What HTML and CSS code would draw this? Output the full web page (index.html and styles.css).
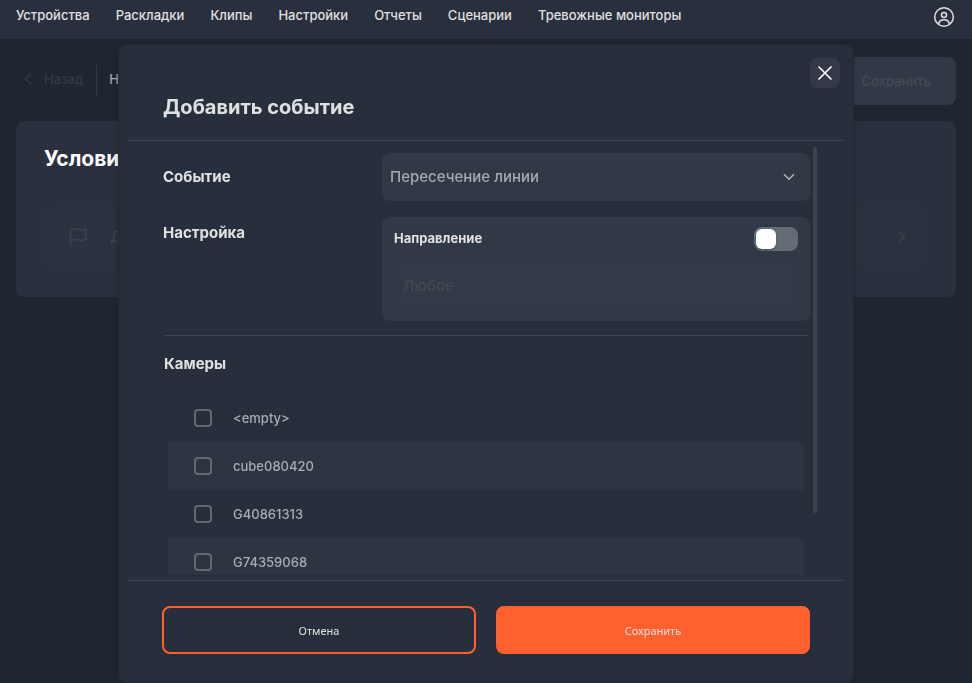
FILE: index.html
```html
<!DOCTYPE html>
<html lang="ru">
<head>
<meta charset="utf-8">
<meta name="viewport" content="width=device-width, initial-scale=1">
<title>Добавить событие</title>
<link rel="stylesheet" href="styles.css">
</head>
<body>
<header class="topbar">
  <nav class="nav">
    <a href="#">Устройства</a>
    <a href="#">Раскладки</a>
    <a href="#">Клипы</a>
    <a href="#">Настройки</a>
    <a href="#">Отчеты</a>
    <a href="#">Сценарии</a>
    <a href="#">Тревожные мониторы</a>
  </nav>
  <button class="profile" type="button" aria-label="Профиль">
    <svg width="22" height="22" viewBox="0 0 22 22" fill="none" stroke="currentColor" stroke-width="1.5">
      <circle cx="11" cy="11" r="9.3"/>
      <circle cx="11" cy="9" r="2.5"/>
      <path d="M5.6 18.4c.3-3 2.500-4.600 5.400-4.600s5.100 1.600 5.400 4.600"/>
    </svg>
  </button>
</header>

<main class="page">
  <div class="toolbar">
    <a class="back" href="#">
      <svg width="8" height="12" viewBox="0 0 8 12" fill="none" stroke="currentColor" stroke-width="1.5"><path d="M7 .8 1.500 6 7 11.200"/></svg>
      Назад
    </a>
    <span class="crumb">Н</span>
    <button class="save-page" type="button" disabled>Сохранить</button>
  </div>
  <section class="card">
    <h2>Услови</h2>
    <div class="condition">
      <span class="flag">
        <svg width="18" height="20" viewBox="0 0 18 20" fill="none" stroke="currentColor" stroke-width="1.5"><path d="M1.500 19V2.500C6 .2 9.500 4.300 16.800 2v10.500C10 15 6 10.500 1.500 13.500"/></svg>
      </span>
      <span class="condition-name">Д</span>
      <svg class="next" width="8" height="12" viewBox="0 0 8 12" fill="none" stroke="currentColor" stroke-width="1.5"><path d="M1 .8 6.500 6 1 11.200"/></svg>
    </div>
  </section>
</main>

<div class="modal" role="dialog" aria-modal="true" aria-labelledby="modal-title">
  <button class="close" type="button" aria-label="Закрыть">
    <svg width="16" height="16" viewBox="0 0 16 16" fill="none" stroke="currentColor" stroke-width="1.600"><path d="M1.500 1.500l13 13M14.500 1.500l-13 13"/></svg>
  </button>
  <h1 class="modal-title" id="modal-title">Добавить событие</h1>
  <div class="modal-body">
    <div class="field">
      <label for="event">Событие</label>
      <div class="select">
        <select id="event"><option>Пересечение линии</option></select>
        <svg width="12" height="8" viewBox="0 0 12 8" fill="none" stroke="currentColor" stroke-width="1.500"><path d="M1 1.200l5 5 5-5"/></svg>
      </div>
    </div>
    <div class="field">
      <span class="field-name">Настройка</span>
      <div class="panel">
        <div class="panel-head">
          <label for="direction">Направление</label>
          <input class="switch" id="direction" type="checkbox" role="switch">
        </div>
        <input class="direction-value" type="text" value="Любое" aria-label="Значение направления" disabled>
      </div>
    </div>
    <section class="cameras">
      <h3>Камеры</h3>
      <ul>
        <li><label><input type="checkbox">&lt;empty&gt;</label></li>
        <li><label><input type="checkbox">cube080420</label></li>
        <li><label><input type="checkbox">G40861313</label></li>
        <li><label><input type="checkbox">G74359068</label></li>
      </ul>
    </section>
    <span class="thumb"></span>
  </div>
  <div class="modal-actions">
    <button class="cancel" type="button">Отмена</button>
    <button class="save" type="button">Сохранить</button>
  </div>
</div>
</body>
</html>
```
FILE: styles.css
```css
* { box-sizing: border-box; }

body {
  margin: 0;
  min-height: 100vh;
  overflow: hidden;
  background: #1f2632;
  color: #e0e0e0;
  font: 500 13px/16px Inter, "Noto Sans", sans-serif;
}

button, input, select { font: inherit; color: inherit; }
a { color: inherit; text-decoration: none; }
h1, h2, h3, ul { margin: 0; padding: 0; }
svg { display: block; flex: none; }

.topbar {
  display: flex;
  justify-content: space-between;
  height: 39px;
  padding: 6px 17px 6px 16px;
  background: #292f3c;
}
.nav { display: flex; gap: 26px; padding-top: 1px; white-space: nowrap; }
.profile { height: 22px; padding: 0; border: 0; background: none; }

.page { padding: 18px 16px; }
.toolbar { display: flex; align-items: center; height: 48px; margin-bottom: 16px; }
.back {
  display: flex;
  align-items: center;
  gap: 12px;
  height: 32px;
  padding: 0 13px 4px 8px;
  border-right: 1px solid #343a47;
  color: #343a47;
}
.crumb { padding: 0 0 4px 12px; color: #a3a6ac; }
.save-page {
  width: 184px;
  height: 48px;
  margin-left: auto;
  padding: 0 25px;
  border: 0;
  border-radius: 8px;
  background: #323946;
  color: #444a57;
  text-align: right;
}
.card { padding: 24px 28px; border-radius: 8px; background: #2a303d; }
.card h2 { color: #fff; font-size: 21px; line-height: 28px; font-weight: 700; }
.condition {
  display: flex;
  align-items: center;
  height: 64px;
  margin: 32px 0 4px;
  padding: 0 22px 0 14px;
  border-radius: 8px;
  background: #2b313e;
  color: #3d434f;
  font-size: 15px;
}
.flag {
  display: grid;
  place-items: center;
  width: 40px;
  height: 40px;
  margin-right: 12px;
  border-radius: 8px;
  background: #2c323f;
}
.next { margin-left: auto; }

.modal {
  position: fixed;
  top: 44px;
  bottom: 0;
  left: 0;
  right: 0;
  display: flex;
  flex-direction: column;
  max-width: 736px;
  margin: 0 auto;
  padding: 0 8px;
  border: 2px solid #252b38;
  border-radius: 8px;
  background: #282f3c;
  box-shadow: 0 0 4px rgba(20, 25, 35, .4);
}
.close {
  position: absolute;
  top: 12px;
  right: 12px;
  display: grid;
  place-items: center;
  width: 30px;
  height: 30px;
  padding: 0;
  border: 0;
  border-radius: 8px;
  background: #333946;
  color: #fff;
}
.modal-title {
  padding: 46px 35px 18px;
  border-bottom: 1px solid #3d434f;
  font-size: 20px;
  line-height: 30px;
  font-weight: 700;
}
.modal-body {
  position: relative;
  flex: 1;
  min-height: 0;
  overflow: hidden;
  margin-bottom: 5px;
  padding: 12px 34px 0 35px;
}
.thumb {
  position: absolute;
  top: 6px;
  right: 27px;
  width: 4px;
  height: 366px;
  border-radius: 2px;
  background: #3d434f;
}
.field {
  display: grid;
  grid-template-columns: 219px 1fr;
  align-items: start;
  margin-bottom: 16px;
  font-size: 15px;
  line-height: 24px;
}
.field > label { padding-top: 12px; font-weight: 700; }
.field-name { padding-top: 4px; font-weight: 700; }
.select { position: relative; }
.select select {
  appearance: none;
  display: block;
  width: 100%;
  height: 48px;
  padding: 0 40px 0 8px;
  border: 0;
  border-radius: 8px;
  background: #323946;
  color: #a6a9af;
}
.select svg { position: absolute; top: 20px; right: 15px; color: #b5b8bd; pointer-events: none; }
.panel { height: 104px; padding: 10px 12px; border-radius: 8px; background: #323946; }
.panel-head { display: flex; align-items: center; justify-content: space-between; height: 24px; font-size: 13px; font-weight: 700; }
.panel-head label { padding-bottom: 2px; }
.switch {
  appearance: none;
  width: 44px;
  height: 24px;
  margin: 0;
  padding: 2px;
  border-radius: 8px;
  background: #646b75;
}
.switch::before {
  content: "";
  display: block;
  width: 20px;
  height: 20px;
  border-radius: 6px;
  background: #fff;
  box-shadow: 0 1px 2px rgba(0, 0, 0, .3);
}
.direction-value {
  display: block;
  width: 100%;
  height: 48px;
  margin-top: 10px;
  padding: 0 9px;
  border: 0;
  border-radius: 8px;
  background: #333a47;
  color: #424954;
}
.cameras { margin: -2px 2px 0 1px; padding-top: 16px; border-top: 1px solid #3d434f; }
.cameras h3 { font-size: 15px; line-height: 24px; font-weight: 700; }
.cameras ul { margin: 18px 4px 0; list-style: none; }
.cameras label { display: flex; align-items: center; gap: 21px; height: 48px; padding: 0 26px; color: #a9acb1; }
.cameras li:nth-child(even) { background: #2e3542; }
.cameras input {
  appearance: none;
  width: 18px;
  height: 18px;
  margin: 0;
  border: 2px solid #636872;
  border-radius: 4px;
}
.modal-actions {
  display: grid;
  grid-template-columns: 1fr 1fr;
  gap: 20px;
  padding: 25px 34px 27px;
  border-top: 1px solid #3d434f;
  font: 400 11px/16px "Noto Sans", sans-serif;
}
.modal-actions button { height: 48px; padding: 2px 8px 0; border: 2px solid #ff602e; border-radius: 8px; }
.cancel { background: transparent; }
.save { background: #ff602e; }
```
